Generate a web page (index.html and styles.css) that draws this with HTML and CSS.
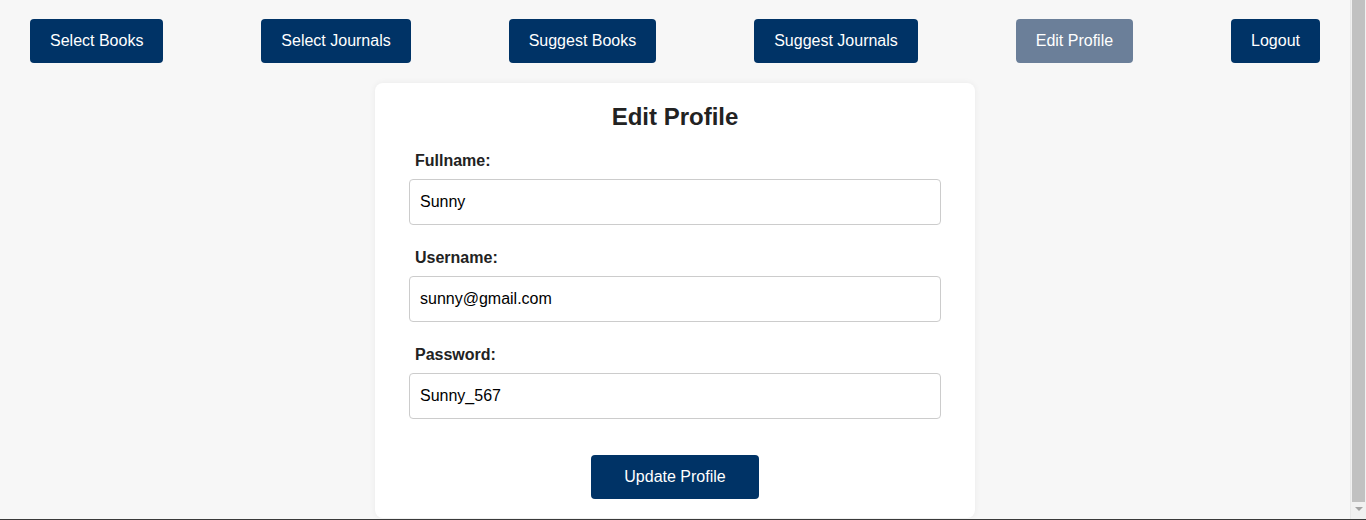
FILE: index.html
```html
<!DOCTYPE html>
<html lang="en">
<head>
<meta charset="utf-8">
<title>Edit Profile</title>
<link rel="stylesheet" href="styles.css">
</head>
<body>
<nav class="nav">
  <a class="nav-btn" href="#">Select Books</a>
  <a class="nav-btn" href="#">Select Journals</a>
  <a class="nav-btn" href="#">Suggest Books</a>
  <a class="nav-btn" href="#">Suggest Journals</a>
  <a class="nav-btn active" href="#">Edit Profile</a>
  <a class="nav-btn" href="#">Logout</a>
</nav>
<main class="card">
  <h2 class="title">Edit Profile</h2>
  <form class="form">
    <div class="field">
      <label class="label" for="fullname">Fullname:</label>
      <input class="input" id="fullname" type="text" value="Sunny">
    </div>
    <div class="field">
      <label class="label" for="username">Username:</label>
      <input class="input" id="username" type="text" value="sunny@gmail.com">
    </div>
    <div class="field">
      <label class="label" for="password">Password:</label>
      <input class="input" id="password" type="text" value="Sunny_567">
    </div>
    <div class="actions">
      <button class="submit" type="button">Update Profile</button>
    </div>
  </form>
</main>
<div class="scrollbar" aria-hidden="true">
  <div class="scroll-thumb"></div>
  <div class="scroll-arrow"></div>
</div>
<div class="frame-edge" aria-hidden="true"></div>
</body>
</html>
```
FILE: styles.css
```css
html, body {
  margin: 0;
  padding: 0;
}
body {
  background: #f7f7f7;
  font-family: "Liberation Sans", Arial, sans-serif;
  padding: 0 16px 20px 0;
}
.nav {
  display: flex;
  justify-content: space-between;
  padding: 19px 30px 0;
}
.nav-btn {
  display: block;
  background: #003366;
  color: #fff;
  text-decoration: none;
  font-size: 16px;
  line-height: 18px;
  padding: 13px 20px;
  border-radius: 4px;
}
.nav-btn.active {
  background: #6b7f99;
}
.card {
  width: 600px;
  box-sizing: border-box;
  margin: 20px auto 0;
  background: #fff;
  border-radius: 8px;
  box-shadow: 0 0 6px rgba(0, 0, 0, 0.06);
  padding: 20px 34px 19px;
}
.title {
  margin: 0;
  text-align: center;
  font-size: 24px;
  line-height: 28px;
  font-weight: bold;
  color: #222;
}
.form {
  margin-top: 21px;
  display: flex;
  flex-direction: column;
  gap: 24px;
}
.field {
  display: flex;
  flex-direction: column;
  gap: 9px;
}
.label {
  font-size: 16px;
  line-height: 18px;
  font-weight: bold;
  color: #222;
  padding-left: 6px;
}
.input {
  box-sizing: border-box;
  width: 100%;
  height: 46px;
  border: 1px solid #ccc;
  border-radius: 4px;
  padding: 0 10px;
  font-family: "Liberation Sans", Arial, sans-serif;
  font-size: 16px;
  color: #000;
  background: #fff;
  outline: none;
}
.actions {
  display: flex;
  justify-content: center;
  padding-top: 12px;
}
.submit {
  background: #003366;
  color: #fff;
  border: none;
  border-radius: 4px;
  font-family: "Liberation Sans", Arial, sans-serif;
  font-size: 16px;
  line-height: 18px;
  padding: 13px 33px;
  width: 168px;
  cursor: pointer;
}
.scrollbar {
  position: fixed;
  top: 0;
  right: 0;
  bottom: 0;
  width: 16px;
  background: #f1f1f1;
  border-left: 1px solid #e8e8e8;
  box-sizing: border-box;
  display: flex;
  flex-direction: column;
  align-items: center;
}
.scroll-thumb {
  width: 13px;
  height: 502px;
  background: #c1c1c1;
}
.scroll-arrow {
  margin-top: 5px;
  width: 0;
  height: 0;
  border-left: 4px solid transparent;
  border-right: 4px solid transparent;
  border-top: 4px solid #a3a3a3;
}
.frame-edge {
  position: fixed;
  left: 0;
  right: 0;
  bottom: 0;
  height: 1px;
  background: #3a3a3a;
}
```
